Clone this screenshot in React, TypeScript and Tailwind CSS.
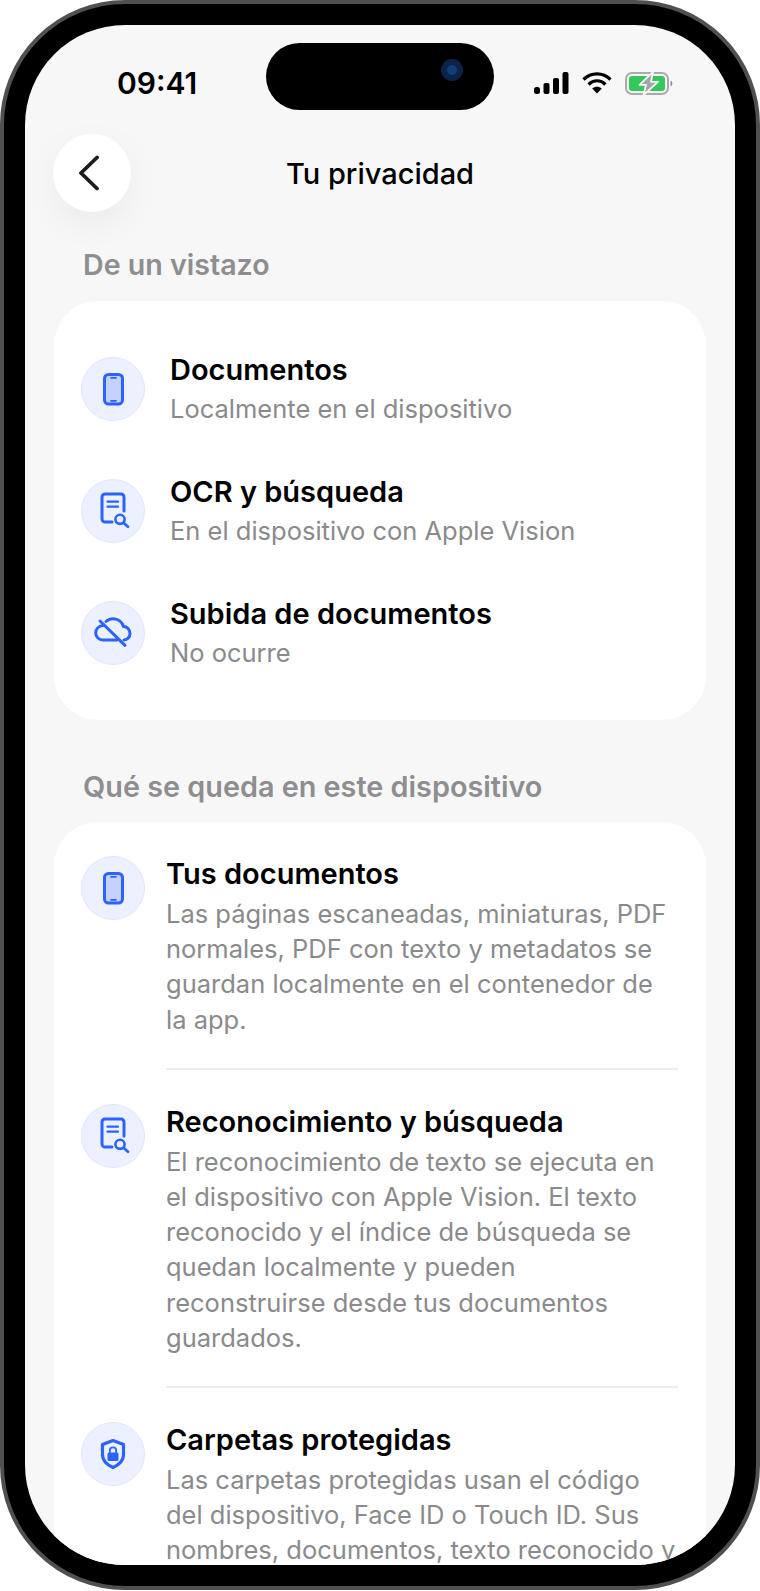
import type { ReactNode } from "react";

const FONT = "font-['Inter','Noto_Sans',sans-serif]";

function PhoneIcon() {
  return (
    <svg width="64" height="64" viewBox="0 0 64 64" fill="none">
      <rect x="23.500" y="17.500" width="18" height="29.500" rx="4" fill="#c4d2fd" stroke="#2a63ff" strokeWidth="3" />
      <path d="M30 20.800h5M30 43.800h5" stroke="#2a63ff" strokeWidth="1.800" strokeLinecap="round" />
    </svg>
  );
}

function DocSearchIcon() {
  return (
    <svg width="64" height="64" viewBox="0 0 64 64" fill="none" stroke="#2a63ff" strokeLinecap="round" strokeLinejoin="round">
      <path d="M43 32V18a3 3 0 0 0-3-3H24a3 3 0 0 0-3 3v22a3 3 0 0 0 3 3h7" strokeWidth="3" />
      <path d="M26.500 22.700h10.500M26.500 27.700h10.500" strokeWidth="2.300" />
      <circle cx="39" cy="40.300" r="4.600" strokeWidth="2.600" />
      <path d="M43 44.300l4 3.400" strokeWidth="2.800" />
    </svg>
  );
}

function CloudOffIcon() {
  return (
    <svg width="64" height="64" viewBox="0 0 64 64" fill="none" stroke="#2a63ff" strokeWidth="3" strokeLinecap="round" strokeLinejoin="round">
      <path d="M22 24.500c-4.500.5-7.300 3.500-7.300 7.500s3.300 7 7.300 7h14" />
      <path d="M43 39c3.500 0 6-3 6-6.500 0-4-3-7-6.500-7-1.500-4.500-5.500-7.800-10-7.800-3 0-5.500 1-7.500 2.800" />
      <path d="M19 20l25 24.300" />
    </svg>
  );
}

function ShieldLockIcon() {
  return (
    <svg width="64" height="64" viewBox="0 0 64 64" fill="none">
      <path
        d="M32 18.500l10.500 4v10.500c0 5.500-4 9.500-10.500 12.500-6.500-3-10.500-7-10.500-12.500V22.500z"
        stroke="#2a63ff"
        strokeWidth="3.200"
        strokeLinejoin="round"
      />
      <rect x="26.500" y="30.500" width="11" height="8.500" rx="1.500" fill="#2a63ff" />
      <path d="M28.800 31v-2.500a3.200 3.200 0 0 1 6.400 0V31" stroke="#2a63ff" strokeWidth="1.800" />
    </svg>
  );
}

function IconCircle({ children }: { children: ReactNode }) {
  return (
    <div className="w-16 h-16 shrink-0 rounded-full bg-[#edf1ff] border border-[#dfe6ff]">
      <div className="-m-px">{children}</div>
    </div>
  );
}

const GLANCE = [
  { icon: <PhoneIcon />, title: "Documentos", sub: "Localmente en el dispositivo" },
  { icon: <DocSearchIcon />, title: "OCR y búsqueda", sub: "En el dispositivo con Apple Vision" },
  { icon: <CloudOffIcon />, title: "Subida de documentos", sub: "No ocurre" },
];

const DETAILS = [
  {
    icon: <PhoneIcon />,
    title: "Tus documentos",
    body: "Las páginas escaneadas, miniaturas, PDF normales, PDF con texto y metadatos se guardan localmente en el contenedor de la app.",
  },
  {
    icon: <DocSearchIcon />,
    title: "Reconocimiento y búsqueda",
    body: "El reconocimiento de texto se ejecuta en el dispositivo con Apple Vision. El texto reconocido y el índice de búsqueda se quedan localmente y pueden reconstruirse desde tus documentos guardados.",
  },
  {
    icon: <ShieldLockIcon />,
    title: "Carpetas protegidas",
    body: "Las carpetas protegidas usan el código del dispositivo, Face ID o Touch ID. Sus nombres, documentos, texto reconocido y",
  },
];

function StatusIcons() {
  return (
    <div className="flex items-center gap-[13px]">
      <svg width="35" height="22" viewBox="0 0 35 22" fill="#000">
        <rect x="0" y="15" width="6" height="7" rx="2.500" />
        <rect x="9.500" y="11" width="6" height="11" rx="2" />
        <rect x="19" y="6" width="6" height="16" rx="2" />
        <rect x="28.500" y="0" width="6" height="22" rx="2" />
      </svg>
      <svg width="30" height="22" viewBox="0 0 30 22" fill="none" stroke="#000" strokeWidth="3.200" strokeLinecap="butt">
        <path d="M1.500 7.500C9 0 21 0 28.500 7.500" />
        <path d="M6.500 12.500C11.500 7.500 18.500 7.500 23.500 12.500" />
        <path d="M15 21.500l-4.800-5c3-2.400 6.600-2.400 9.600 0z" fill="#000" stroke="none" />
      </svg>
      <svg width="48" height="25" viewBox="0 0 48 25" fill="none">
        <rect x="1" y="2" width="42" height="21" rx="6" stroke="#a9aaac" strokeWidth="2" />
        <rect x="4" y="5" width="36" height="15" rx="3" fill="#34c759" />
        <path d="M45.500 9.500v6c1.200-.4 1.800-1.600 1.800-3s-.6-2.600-1.800-3z" fill="#8e8e90" />
        <path d="M28 0.800L14.500 13.800H21L18.500 24 33 10.800H26z" fill="#a5a5a8" stroke="#f7f7f8" strokeWidth="1.800" strokeLinejoin="round" />
      </svg>
    </div>
  );
}

export default function App() {
  return (
    <div className={`w-[760px] h-[1591px] bg-white ${FONT}`}>
      <div className="w-[760px] h-[1590px] rounded-[125px] bg-black border-[4px] border-[#505052] p-[21px]">
        <div className="relative h-full rounded-[100px] bg-[#f7f7f8] overflow-hidden">
          {/* dynamic island */}
          <div className="absolute left-[241px] top-[18px] w-[228px] h-[67px] rounded-full bg-black">
            <div className="absolute left-[175px] top-[16px] w-[22px] h-[22px] rounded-full bg-[#0b2447] flex items-center justify-center">
              <div className="w-[10px] h-[10px] rounded-full bg-[#0f3e78]" />
            </div>
          </div>

          {/* status bar */}
          <div className="flex items-center justify-between h-[109px] pt-[7px] pl-[92px] pr-[62px]">
            <span className="text-[30px] leading-[34px] font-semibold text-black">09:41</span>
            <StatusIcons />
          </div>

          {/* nav */}
          <div className="grid grid-cols-[78px_1fr_78px] items-center px-[28px]">
            <div className="w-[78px] h-[78px] rounded-full bg-white shadow-[0_12px_36px_rgba(0,0,0,0.05)] flex items-center justify-center">
              <svg width="26" height="36" viewBox="0 0 26 36" fill="none" stroke="#1c1c1e" strokeWidth="3.800" strokeLinecap="round" strokeLinejoin="round" className="-ml-[4px]">
                <path d="M20 2.500L4 18l16 15.500" />
              </svg>
            </div>
            <h1 className="pt-[2px] text-center text-[29px] leading-[34px] font-medium text-black">Tu privacidad</h1>
          </div>

          <h2 className="mt-[36px] mb-[19px] pl-[58px] text-[28.600px] leading-[34px] font-semibold text-[#8e8e90]">De un vistazo</h2>

          <div className="mx-[29px] rounded-[44px] bg-white px-[27px] pt-[51px] pb-[51px] flex flex-col gap-[49px]">
            {GLANCE.map((row) => (
              <div key={row.title} className="flex items-center gap-[25px]">
                <IconCircle>{row.icon}</IconCircle>
                <div className="flex flex-col gap-[5px]">
                  <div className="text-[29px] leading-[36px] font-semibold text-black">{row.title}</div>
                  <div className="text-[25.500px] leading-[32px] text-[#8a8a8c]">{row.sub}</div>
                </div>
              </div>
            ))}
          </div>

          <h2 className="mt-[50px] mb-[18px] pl-[58px] text-[28.800px] leading-[34px] font-semibold text-[#8e8e90]">Qué se queda en este dispositivo</h2>

          <div className="mx-[29px] rounded-[44px] bg-white pl-[27px] pr-[28px] pt-[34px]">
            {DETAILS.map((row, i) => (
              <div key={row.title} className="flex gap-[21px]">
                <IconCircle>{row.icon}</IconCircle>
                <div className={`flex-1 pb-[31px] mb-[34px] ${i < DETAILS.length - 1 ? "border-b-2 border-[#ececee]" : ""}`}>
                  <div className="text-[29px] leading-[36px] font-semibold text-black">{row.title}</div>
                  <p className="mt-[4px] text-[25.500px] leading-[35.200px] text-[#8a8a8c]">{row.body}</p>
                </div>
              </div>
            ))}
          </div>
        </div>
      </div>
    </div>
  );
}
